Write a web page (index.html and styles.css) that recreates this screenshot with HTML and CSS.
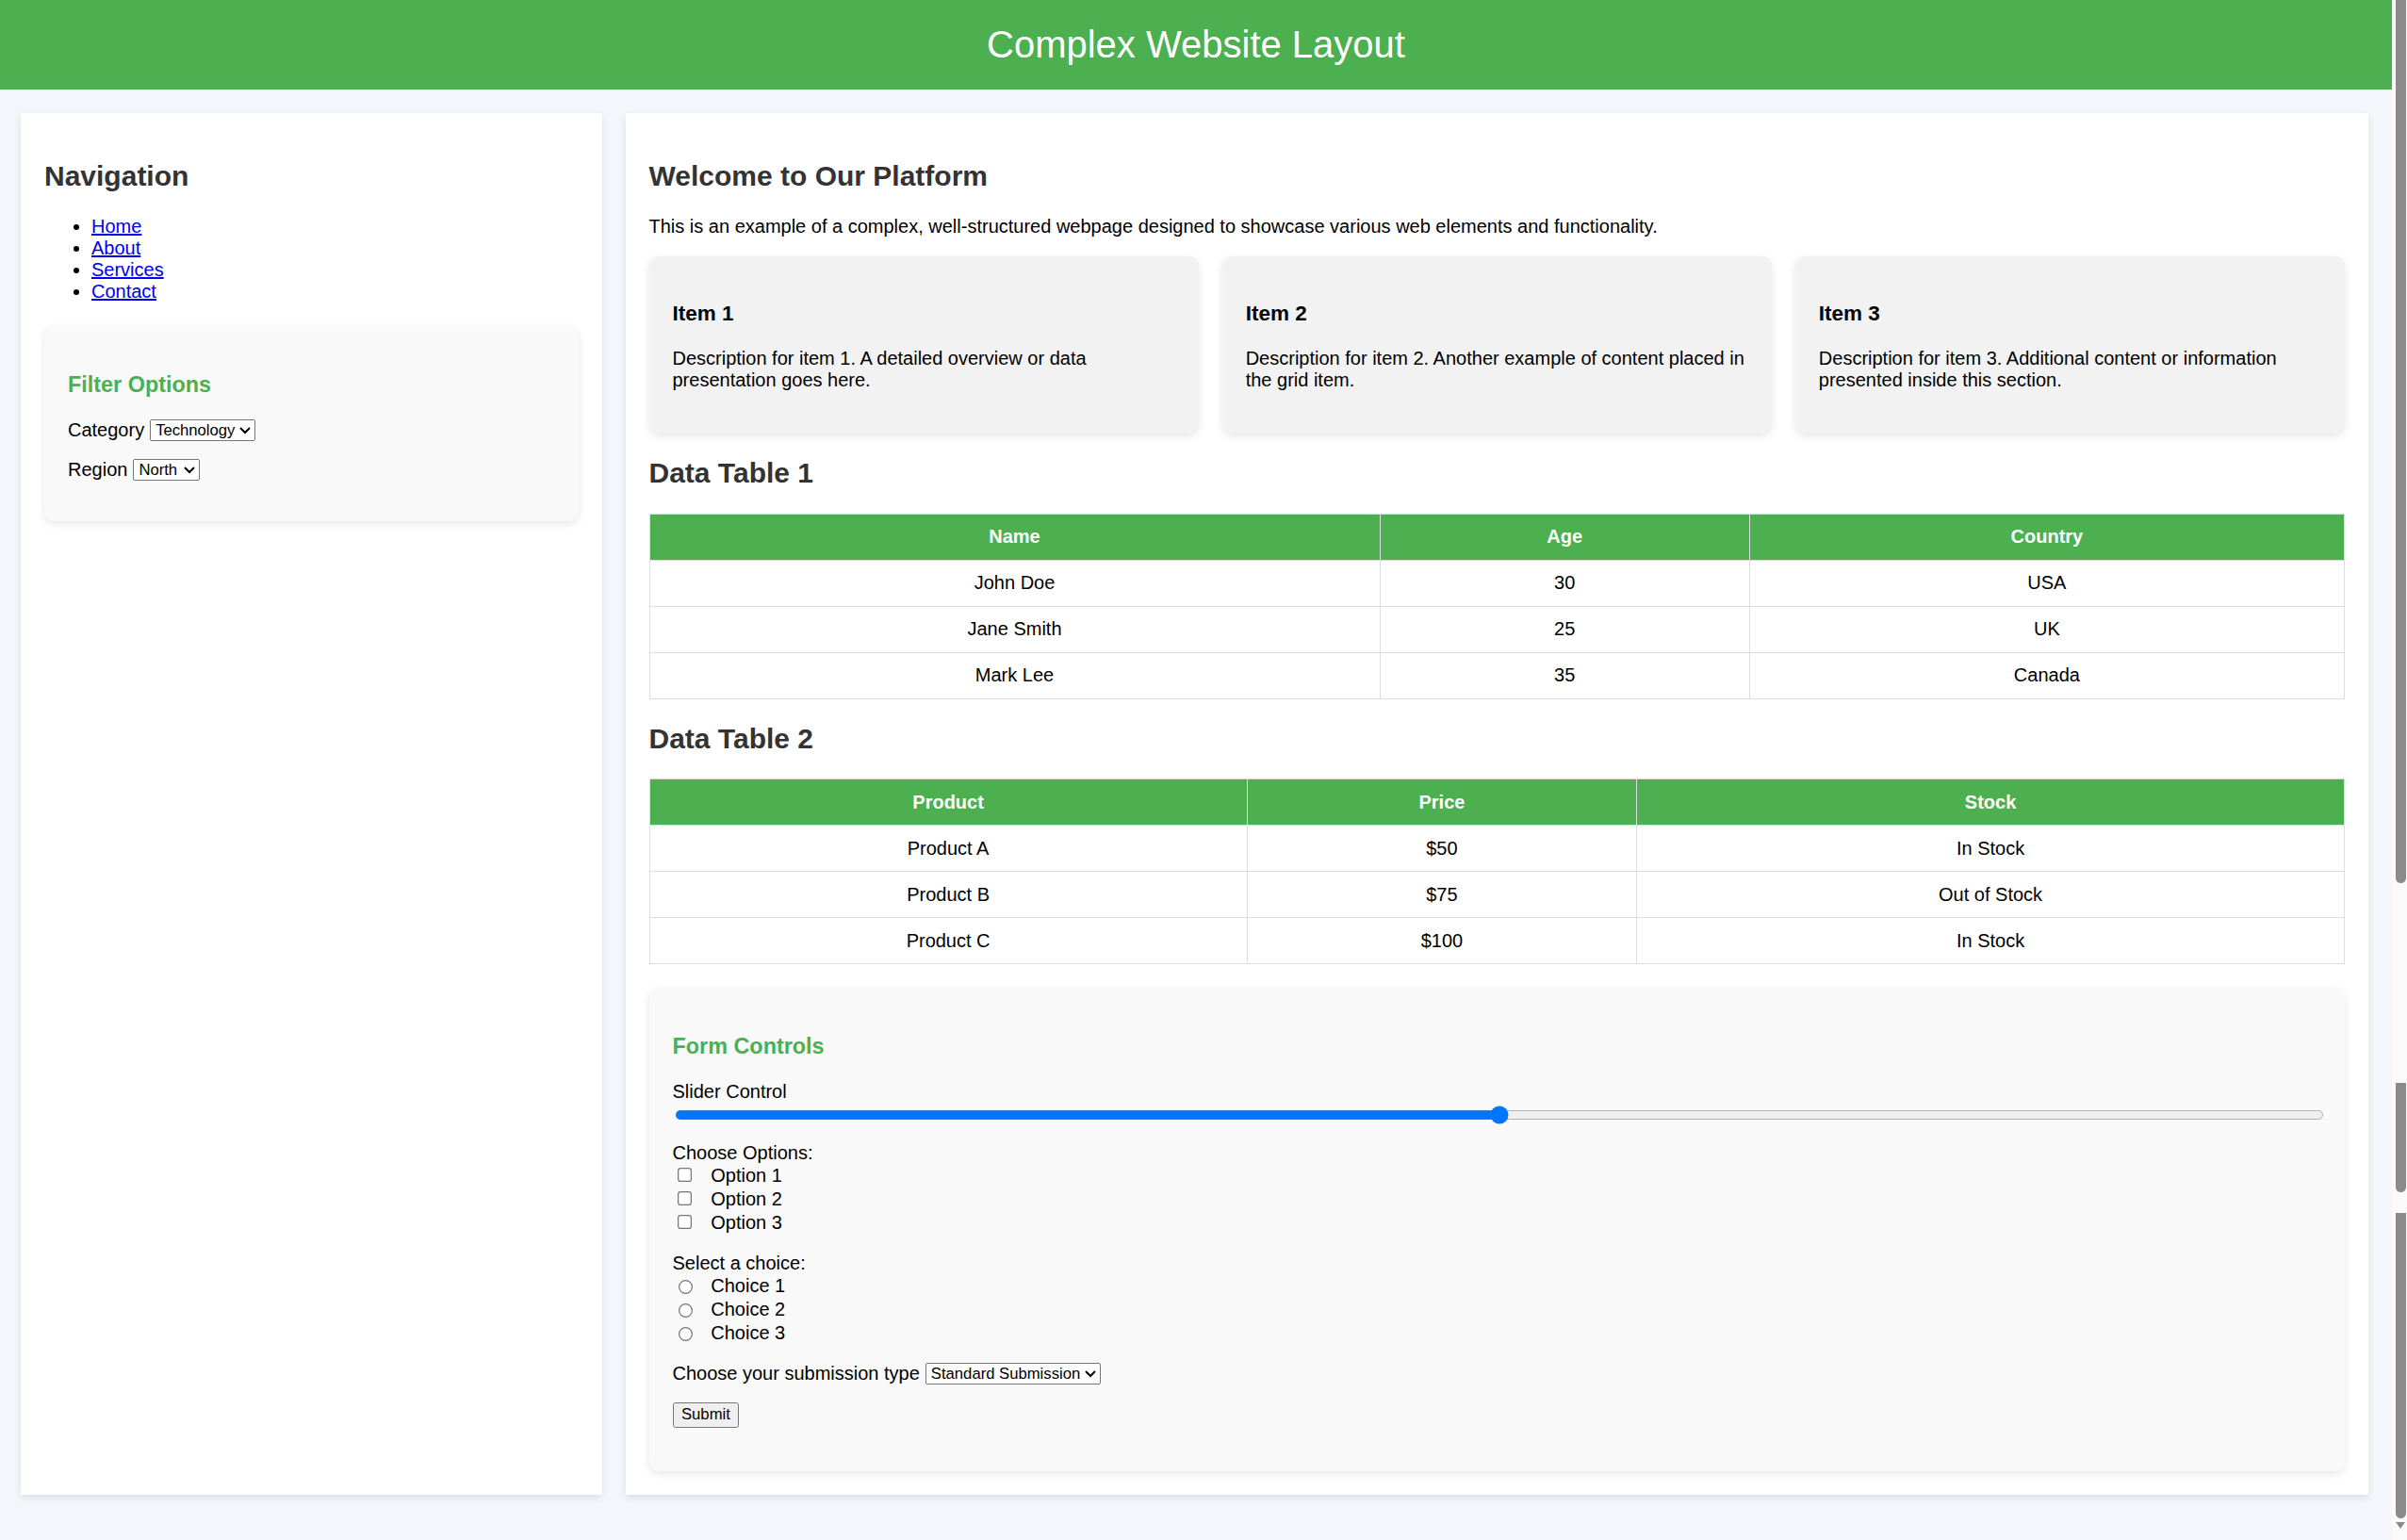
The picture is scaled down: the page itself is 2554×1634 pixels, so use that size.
FILE: index.html
```html
<!DOCTYPE html>
<html lang="en">
<head>
<meta charset="utf-8">
<title>Complex Website Layout</title>
<link rel="stylesheet" href="styles.css">
</head>
<body>
<div class="page">
  <header class="site-header">
    <h1>Complex Website Layout</h1>
  </header>
  <div class="layout">
    <aside class="card sidebar">
      <h2>Navigation</h2>
      <ul class="nav">
        <li><a href="#">Home</a></li>
        <li><a href="#">About</a></li>
        <li><a href="#">Services</a></li>
        <li><a href="#">Contact</a></li>
      </ul>
      <div class="panel">
        <h3>Filter Options</h3>
        <div class="select-row">
          <label for="cat">Category</label>
          <select id="cat" class="ctl"><option>Technology</option><option>Health</option></select>
        </div>
        <div class="select-row">
          <label for="reg">Region</label>
          <select id="reg" class="ctl"><option>North</option><option>South</option></select>
        </div>
      </div>
    </aside>
    <main class="card content">
      <h2>Welcome to Our Platform</h2>
      <p class="intro">This is an example of a complex, well-structured webpage designed to showcase various web elements and functionality.</p>
      <div class="items">
        <div class="item">
          <h3>Item 1</h3>
          <p>Description for item 1. A detailed overview or data presentation goes here.</p>
        </div>
        <div class="item">
          <h3>Item 2</h3>
          <p>Description for item 2. Another example of content placed in the grid item.</p>
        </div>
        <div class="item">
          <h3>Item 3</h3>
          <p>Description for item 3. Additional content or information presented inside this section.</p>
        </div>
      </div>
      <h2>Data Table 1</h2>
      <table class="data">
        <thead><tr><th>Name</th><th>Age</th><th>Country</th></tr></thead>
        <tbody>
          <tr><td>John Doe</td><td>30</td><td>USA</td></tr>
          <tr><td>Jane Smith</td><td>25</td><td>UK</td></tr>
          <tr><td>Mark Lee</td><td>35</td><td>Canada</td></tr>
        </tbody>
      </table>
      <h2>Data Table 2</h2>
      <table class="data">
        <thead><tr><th>Product</th><th>Price</th><th>Stock</th></tr></thead>
        <tbody>
          <tr><td>Product A</td><td>$50</td><td>In Stock</td></tr>
          <tr><td>Product B</td><td>$75</td><td>Out of Stock</td></tr>
          <tr><td>Product C</td><td>$100</td><td>In Stock</td></tr>
        </tbody>
      </table>
      <div class="panel form-panel">
        <h3>Form Controls</h3>
        <div class="group">
          <label class="block" for="slider">Slider Control</label>
          <input type="range" id="slider" class="range" min="0" max="100" value="50">
        </div>
        <div class="group">
          <label class="block">Choose Options:</label>
          <div class="opt"><input type="checkbox" id="o1" class="ctl"><label for="o1">Option 1</label></div>
          <div class="opt"><input type="checkbox" id="o2" class="ctl"><label for="o2">Option 2</label></div>
          <div class="opt"><input type="checkbox" id="o3" class="ctl"><label for="o3">Option 3</label></div>
        </div>
        <div class="group">
          <label class="block">Select a choice:</label>
          <div class="opt radio"><input type="radio" name="c" id="c1" class="ctl"><label for="c1">Choice 1</label></div>
          <div class="opt radio"><input type="radio" name="c" id="c2" class="ctl"><label for="c2">Choice 2</label></div>
          <div class="opt radio"><input type="radio" name="c" id="c3" class="ctl"><label for="c3">Choice 3</label></div>
        </div>
        <div class="group select-row tall">
          <label for="sub">Choose your submission type</label>
          <select id="sub" class="ctl"><option>Standard Submission</option><option>Express Submission</option></select>
        </div>
        <div class="group btn-row">
          <button type="button" class="ctl">Submit</button>
        </div>
      </div>
    </main>
  </div>
</div>
<div class="scrollbar">
  <div class="thumb thumb-a"></div>
  <div class="thumb thumb-b"></div>
  <div class="thumb thumb-c"></div>
  <div class="arrow"></div>
</div>
</body>
</html>
```
FILE: styles.css
```css
html, body {
  margin: 0;
  padding: 0;
}
body {
  display: flex;
  height: 1634px;
  overflow: hidden;
  background: #f3f6fa;
  font-family: "Liberation Sans", Arial, sans-serif;
  font-size: 20px;
  color: #000;
}
.page {
  flex: 1;
  min-width: 0;
}
.site-header {
  background: #4caf50;
  color: #fff;
  text-align: center;
  padding: 24px 0 25px;
}
.site-header h1 {
  margin: 0;
  font-size: 40px;
  line-height: 46px;
  font-weight: normal;
}
.layout {
  display: grid;
  grid-template-columns: 1fr 3fr;
  gap: 25px;
  padding: 25px 25px 25px 22px;
}
.card {
  background: #fff;
  padding: 25px;
  box-shadow: 0 3px 8px rgba(0, 0, 0, 0.1);
}
.card h2 {
  font-size: 30px;
  margin: 24.9px 0;
  color: #333;
  line-height: 34.47px;
}
.nav {
  margin: 20px 0;
  padding-left: 50px;
  line-height: 23px;
}
.nav a {
  color: #0000ee;
}
.panel {
  background: #f9f9f9;
  padding: 25px;
  border-radius: 10px;
  margin-top: 25px;
  box-shadow: 0 3px 8px rgba(0, 0, 0, 0.1);
}
.panel h3 {
  color: #4caf50;
  font-size: 23.4px;
  line-height: 26.9px;
  margin: 23.4px 0;
}
.select-row {
  display: flex;
  align-items: center;
  gap: 6px;
  height: 23px;
  margin-bottom: 18.75px;
}
.select-row.tall {
  height: 24px;
}
.ctl {
  zoom: 1.25;
  font-family: "Liberation Sans", Arial, sans-serif;
  font-size: 13.33px;
}
.intro {
  margin: 20px 0;
  line-height: 23px;
}
.items {
  display: grid;
  grid-template-columns: repeat(3, 1fr);
  gap: 25px;
}
.item {
  background: #f2f2f2;
  padding: 25px;
  border-radius: 10px;
  box-shadow: 0 3px 8px rgba(0, 0, 0, 0.1);
}
.item h3 {
  font-size: 22.5px;
  line-height: 25.85px;
  margin: 23.2px 0;
  color: #000;
}
.item p {
  margin: 20px 0;
  line-height: 23px;
}
.data {
  width: 100%;
  border-collapse: collapse;
  margin: 25px 0;
}
.data th, .data td {
  border: 1px solid #ddd;
  padding: 12.5px;
  text-align: center;
  line-height: 23px;
}
.data th {
  background: #4caf50;
  color: #fff;
  font-weight: bold;
}
.group {
  margin-bottom: 18.75px;
}
.block {
  display: block;
  line-height: 23px;
}
.range {
  zoom: 1.25;
  display: block;
  width: 100%;
  height: 16px;
  margin: 2.5px 2px 3px;
}
.opt {
  display: flex;
  align-items: center;
  height: 25px;
}
.opt label {
  padding-left: 15.8px;
}
.opt.radio label {
  padding-left: 14.5px;
}
.btn-row {
  display: flex;
  margin-bottom: 21.5px;
}
.btn-row button {
  margin: 0;
}
.scrollbar {
  width: 16px;
  flex: none;
  background: #fafafa;
  display: flex;
  flex-direction: column;
}
.thumb {
  width: 11px;
  margin-left: 4px;
  background: #8a8a8a;
  border-radius: 0 0 6px 6px;
}
.thumb-a {
  height: 937px;
}
.thumb-b {
  height: 116px;
  margin-top: 212px;
  border-radius: 0 0 6px 6px;
}
.thumb-c {
  height: 324px;
  margin-top: 22px;
}
.arrow {
  width: 0;
  height: 0;
  margin: 4px 0 0 4px;
  border-left: 5.5px solid transparent;
  border-right: 5.5px solid transparent;
  border-top: 7px solid #8a8a8a;
}
```
